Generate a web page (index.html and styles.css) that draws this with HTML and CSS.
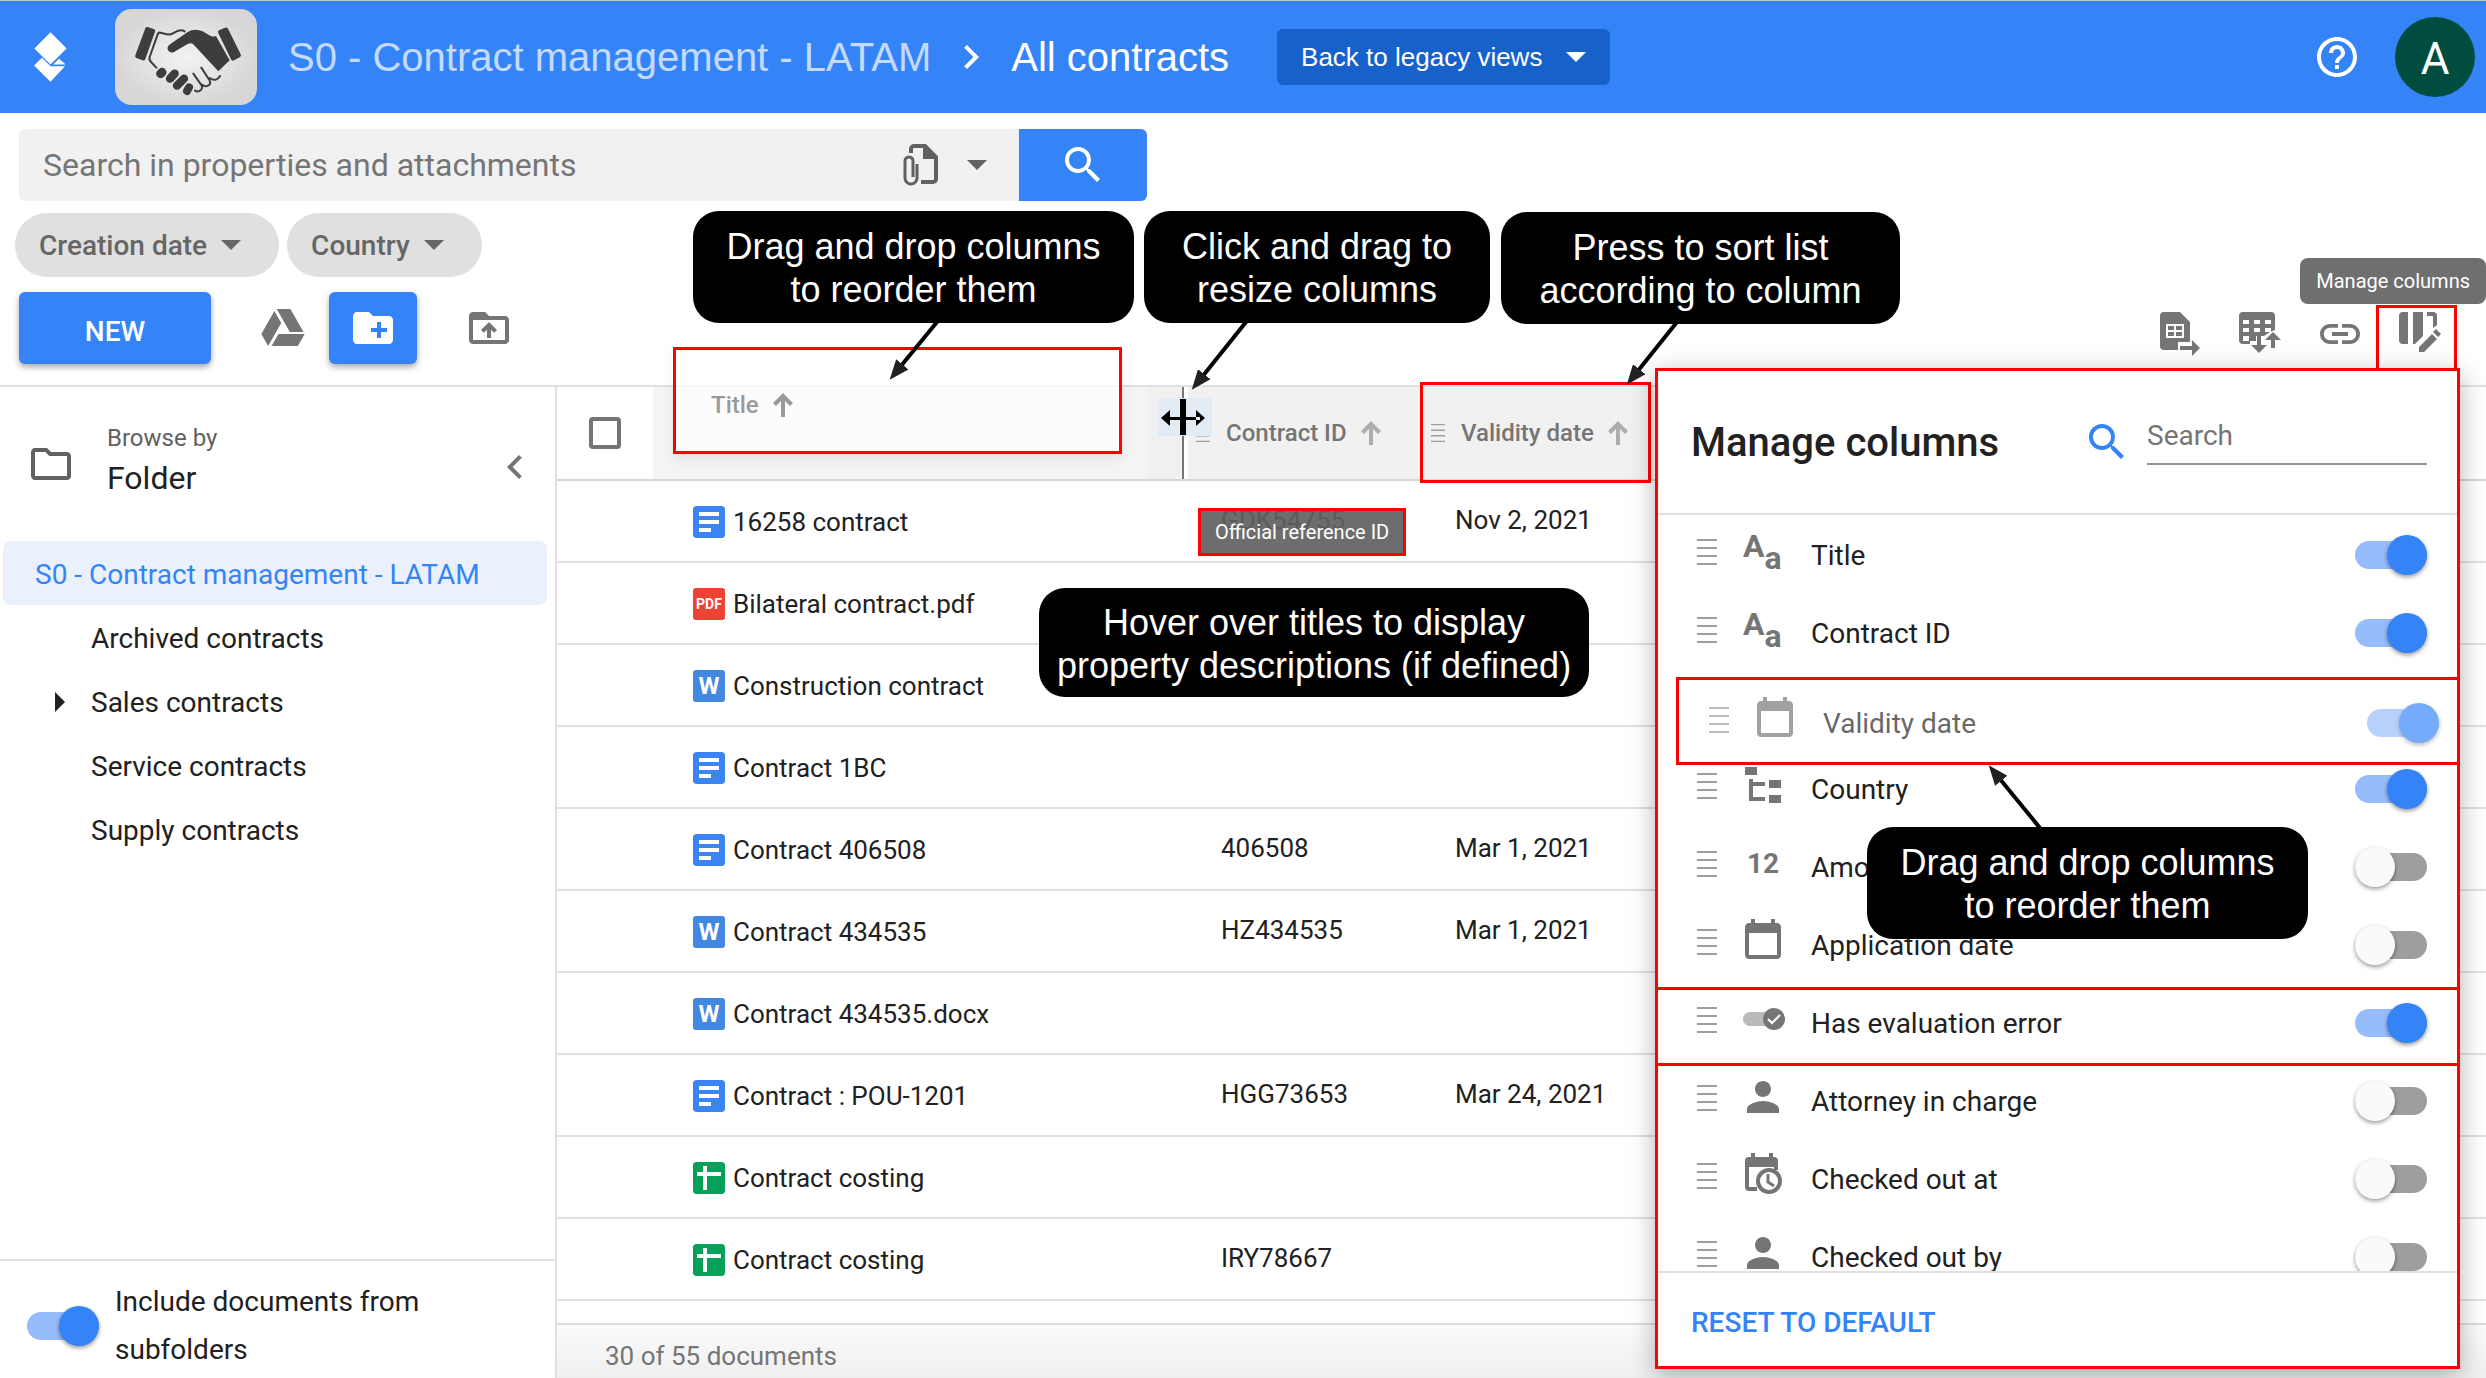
FILE: index.html
```html
<!DOCTYPE html>
<html lang="en">
<head>
    <meta charset="UTF-8">
    <meta name="viewport" content="width=device-width, initial-scale=1.0">
    <title>All contracts</title>
    <link rel="stylesheet" href="styles.css">
</head>
<body>
    <svg class="sprite" aria-hidden="true">
        <symbol id="i-search" viewBox="0 0 24 24"><path d="M15.5 14h-.79l-.28-.27A6.471 6.471 0 0 0 16 9.5 6.5 6.5 0 1 0 9.5 16c1.61 0 3.09-.59 4.23-1.57l.27.28v.79l5 4.99L20.49 19l-4.99-5zm-6 0C7.01 14 5 11.99 5 9.5S7.01 5 9.5 5 14 7.01 14 9.5 11.99 14 9.5 14z"/></symbol>
        <symbol id="i-help" viewBox="0 0 24 24"><path d="M11 18h2v-2h-2v2zm1-16C6.48 2 2 6.48 2 12s4.48 10 10 10 10-4.48 10-10S17.52 2 12 2zm0 18c-4.41 0-8-3.59-8-8s3.59-8 8-8 8 3.59 8 8-3.59 8-8 8zm0-14c-2.21 0-4 1.79-4 4h2c0-1.1.9-2 2-2s2 .9 2 2c0 2-3 1.75-3 5h2c0-2.25 3-2.5 3-5 0-2.21-1.79-4-4-4z"/></symbol>
        <symbol id="i-down" viewBox="0 0 20 10"><path d="M0 0l10 10L20 0z"/></symbol>
        <symbol id="i-right" viewBox="0 0 10 20"><path d="M0 0l10 10L0 20z"/></symbol>
        <symbol id="i-chevron-right" viewBox="0 0 24 24"><path d="M10 6L8.59 7.41 13.17 12l-4.58 4.59L10 18l6-6z"/></symbol>
        <symbol id="i-chevron-left" viewBox="0 0 24 24"><path d="M15.41 7.41L14 6l-6 6 6 6 1.41-1.41L10.83 12z"/></symbol>
        <symbol id="i-attach" viewBox="0 0 36 42">
            <path d="M8 9V5a3 3 0 0 1 3-3h11l11 11v22a3 3 0 0 1-3 3H18" fill="none" stroke="currentColor" stroke-width="4"/>
            <path d="M20 2v13h14L22 1z"/>
            <path d="M14 20v14a6 6 0 0 1-12 0V17a4 4 0 0 1 8 0v16" fill="none" stroke="currentColor" stroke-width="3"/>
        </symbol>
        <symbol id="i-drive" viewBox="0 0 24 24"><path d="M7.71 3.5L1.15 15l3.43 6 6.55-11.5L7.71 3.5zM9.73 15L6.3 21h13.12l3.43-6H9.73zM22.28 14l-6.56-11.5H8.86L15.42 14h6.86z"/></symbol>
        <symbol id="i-new-folder" viewBox="0 0 24 24"><path d="M20 6h-8l-2-2H4c-1.11 0-1.99.89-1.99 2L2 18c0 1.11.89 2 2 2h16c1.11 0 2-.89 2-2V8c0-1.11-.89-2-2-2zm-1 8h-3v3h-2v-3h-3v-2h3V9h2v3h3v2z"/></symbol>
        <symbol id="i-upload" viewBox="0 0 24 24"><path d="M20 6h-8l-2-2H4c-1.1 0-1.99.9-1.99 2L2 18c0 1.1.9 2 2 2h16c1.1 0 2-.9 2-2V8c0-1.1-.9-2-2-2zm0 12H4V8h16v10zM8 13.01l1.41 1.41L11 12.84V17h2v-4.16l1.59 1.59L16 13.01 12.01 9 8 13.01z"/></symbol>
        <symbol id="i-folder" viewBox="0 0 24 24"><path d="M9.17 6l2 2H20v10H4V6h5.17M10 4H4c-1.1 0-1.99.9-1.99 2L2 18c0 1.1.9 2 2 2h16c1.1 0 2-.9 2-2V8c0-1.1-.9-2-2-2h-8l-2-2z"/></symbol>
        <symbol id="i-export" viewBox="0 0 48 48">
            <path fill-rule="evenodd" d="M8 2h16l10 10v20H22v8H8a4 4 0 0 1-4-4V6a4 4 0 0 1 4-4zm2 12v14h18V14z"/>
            <path d="M12 16h6v4h-6zm8 0h6v4h-6zm-8 6h6v4h-6zm8 0h6v4h-6z"/>
            <path d="M24 36h12v-6l8 8-8 8v-6H24z"/>
        </symbol>
        <symbol id="i-table" viewBox="0 0 48 48">
            <path fill-rule="evenodd" d="M7 2h28a4 4 0 0 1 4 4v14l-5 2-6 4h-8v5h-6v3H7a4 4 0 0 1-4-4V6a4 4 0 0 1 4-4zm0 8v4h6v-4zm11 0v4h6v-4zm11 0v4h6v-4zM7 18v4h6v-4zm11 0v4h6v-4zm11 0v4h6v-4zM7 26v5h6v-5z"/>
            <path d="M21 26h4v9h6l-8 8-8-8h6z"/>
            <path d="M35 38V30h-6l8-8 8 8h-6v8z"/>
        </symbol>
        <symbol id="i-link" viewBox="0 0 24 24"><path d="M3.9 12c0-1.71 1.39-3.1 3.1-3.1h4V7H7c-2.76 0-5 2.24-5 5s2.24 5 5 5h4v-1.9H7c-1.71 0-3.1-1.39-3.1-3.1zM8 13h8v-2H8v2zm9-6h-4v1.9h4c1.71 0 3.1 1.39 3.1 3.1s-1.39 3.1-3.1 3.1h-4V17h4c2.76 0 5-2.24 5-5s-2.24-5-5-5z"/></symbol>
        <symbol id="i-columns" viewBox="0 0 48 48">
            <path d="M7 2h5v32H7a4 4 0 0 1-4-4V6a4 4 0 0 1 4-4zM17 2h10v24l-8 8h-2z"/>
            <path d="M31 2h6a4 4 0 0 1 4 4v9l-4 3V6h-6z"/>
            <path d="M23 37l13-13 5 5-13 13h-5zM37 22l3-3 5 5-3 3z"/>
        </symbol>
        <symbol id="i-sort" viewBox="0 0 20 24"><path d="M10 0l10 10-3 3-5-5v16H8V8l-5 5-3-3z"/></symbol>
        <symbol id="i-grip" viewBox="0 0 20 26"><path d="M0 0h20v2H0zM0 8h20v2H0zM0 16h20v2H0zM0 24h20v2H0z"/></symbol>
        <symbol id="i-date" viewBox="0 0 24 24"><path d="M19 3h-1V1h-2v2H8V1H6v2H5c-1.1 0-2 .9-2 2v14c0 1.1.9 2 2 2h14c1.1 0 2-.9 2-2V5c0-1.1-.9-2-2-2zm0 16H5V8h14v11z"/></symbol>
        <symbol id="i-date-time" viewBox="0 0 48 48">
            <path d="M10 6h2V2h4v4h14V2h4v4h1a4 4 0 0 1 4 4v9h-4v-3H10v20h8v4h-8a4 4 0 0 1-4-4V10a4 4 0 0 1 4-4z"/>
            <circle cx="30" cy="30" r="11" fill="none" stroke="currentColor" stroke-width="4"/>
            <path d="M29 23v8l6 4" fill="none" stroke="currentColor" stroke-width="3"/>
        </symbol>
        <symbol id="i-tree" viewBox="0 0 48 48"><path d="M6 6h12v8H6zM30 19h12v8H30zM30 34h12v8H30zM10 18h4v3h12v4H14v11h12v4H10z"/></symbol>
        <symbol id="i-boolean" viewBox="0 0 48 48">
            <rect x="4" y="17" width="34" height="14" rx="7" opacity=".5"/>
            <circle cx="35" cy="24" r="11"/>
            <path d="M29 24l4 4 8-8" fill="none" stroke="#fff" stroke-width="2"/>
        </symbol>
        <symbol id="i-person" viewBox="0 0 24 24"><path d="M12 12c2.21 0 4-1.79 4-4s-1.79-4-4-4-4 1.79-4 4 1.79 4 4 4zm0 2c-2.67 0-8 1.34-8 4v2h16v-2c0-2.66-5.33-4-8-4z"/></symbol>
        <symbol id="f-doc" viewBox="0 0 32 32"><rect width="32" height="32" rx="3" fill="#3a85f3"/><path d="M6 6h20v4H6zM6 14h20v4H6zM6 22h12v4H6z" fill="#fff"/></symbol>
        <symbol id="f-sheet" viewBox="0 0 32 32"><rect width="32" height="32" rx="3" fill="#07a05a"/><path d="M10 4h4v6h14v4H14v14h-4V14H4v-4h6z" fill="#fff"/></symbol>
    </svg>

    <div class="app">
        <header class="app-bar">
            <svg class="logo" viewBox="102 95 100 152">
                <path d="M152 96l49 49-49 49-49-49z"/>
                <path d="M126 173l26 26h44l-44 47-50-49z"/>
                <path d="M178 176l20 18h-38z"/>
            </svg>
            <svg class="library-thumb" viewBox="345 27 426 288">
                <defs>
                    <radialGradient id="thumb-bg"><stop offset="0" stop-color="#f3f1f3"/><stop offset="1" stop-color="#d9d6d8"/></radialGradient>
                </defs>
                <rect x="345" y="27" width="426" height="288" rx="50" fill="url(#thumb-bg)"/>
                <g fill="#3b3d3e">
                    <path d="M443 81l20 7q4 2 2 7l-29 82q-2 6-8 4l-19-7q-5-2-3-8l30-81q2-5 7-4z"/>
                    <path d="M657 91l18-8q6-2 9 3l38 77q3 6-3 9l-17 9q-6 3-9-3l-38-78q-3-6 2-9z"/>
                    <path d="M508 134l55-38q20-12 45-2l20 12q10 6 20 2l41 73-34 33-76-82q-8-4-16 0l-41 24c-14 7-27-12-14-22z"/>
                </g>
                <path d="M554 94c-14-9-27 1-37 7s-22 0-36-3q-6-1-8 5l-24 68q-3 8 4 15l16 17" fill="none" stroke="#3b3d3e" stroke-width="6" stroke-linecap="round" stroke-linejoin="round"/>
                <g stroke="#3b3d3e" stroke-linecap="round">
                    <path d="M482 221l4-4" stroke-width="27"/>
                    <path d="M510 236l14-15" stroke-width="25"/>
                    <path d="M531 257l21-21" stroke-width="25"/>
                    <path d="M561 273l6-11" stroke-width="24"/>
                </g>
                <path d="M585 272c14 8 28-8 17-20l-22-31M604 253c16 12 33 1 24-13l-24-37M629 234c12 9 24 7 31-6" fill="none" stroke="#3b3d3e" stroke-width="6" stroke-linecap="round"/>
            </svg>
            <nav class="crumbs">
                <a href="#" class="crumb">S0 - Contract management - LATAM</a>
                <svg class="icon"><use href="#i-chevron-right"/></svg>
                <a href="#" class="crumb crumb-current">All contracts</a>
            </nav>
            <button class="legacy-btn">Back to legacy views <svg class="caret"><use href="#i-down"/></svg></button>
            <div class="account">
                <button class="icon-btn" aria-label="Help"><svg class="icon"><use href="#i-help"/></svg></button>
                <button class="avatar">A</button>
            </div>
        </header>

        <section class="toolbar">
            <form class="search">
                <input type="search" class="search-input" placeholder="Search in properties and attachments" aria-label="Search in properties and attachments">
                <button type="button" class="search-scope" aria-label="Search scope">
                    <svg class="attach"><use href="#i-attach"/></svg>
                    <svg class="caret"><use href="#i-down"/></svg>
                </button>
                <button type="button" class="search-btn" aria-label="Search"><svg class="icon"><use href="#i-search"/></svg></button>
            </form>
            <div class="chips">
                <button class="chip">Creation date <svg class="caret"><use href="#i-down"/></svg></button>
                <button class="chip">Country <svg class="caret"><use href="#i-down"/></svg></button>
            </div>
            <div class="actions">
                <button class="new-btn">NEW</button>
                <button class="icon-btn drive-btn" aria-label="Add from Drive"><svg class="icon"><use href="#i-drive"/></svg></button>
                <button class="new-folder-btn" aria-label="New folder"><svg class="icon"><use href="#i-new-folder"/></svg></button>
                <button class="icon-btn upload-btn" aria-label="Upload folder"><svg class="icon"><use href="#i-upload"/></svg></button>
                <div class="view-actions">
                    <button class="icon-btn" aria-label="Export list"><svg class="icon"><use href="#i-export"/></svg></button>
                    <button class="icon-btn" aria-label="Bulk update"><svg class="icon"><use href="#i-table"/></svg></button>
                    <button class="icon-btn" aria-label="Copy link"><svg class="icon"><use href="#i-link"/></svg></button>
                    <button class="icon-btn" aria-label="Manage columns"><svg class="icon"><use href="#i-columns"/></svg></button>
                </div>
            </div>
        </section>

        <div class="body">
            <aside class="sidebar">
                <div class="browse">
                    <svg class="icon"><use href="#i-folder"/></svg>
                    <div class="browse-text">
                        <div class="browse-by">Browse by</div>
                        <div class="browse-mode">Folder</div>
                    </div>
                    <button class="icon-btn" aria-label="Collapse"><svg class="icon"><use href="#i-chevron-left"/></svg></button>
                </div>
                <nav class="tree">
                    <a href="#" class="tree-item tree-root">S0 - Contract management - LATAM</a>
                    <a href="#" class="tree-item">Archived contracts</a>
                    <a href="#" class="tree-item"><svg class="expander"><use href="#i-right"/></svg>Sales contracts</a>
                    <a href="#" class="tree-item">Service contracts</a>
                    <a href="#" class="tree-item">Supply contracts</a>
                </nav>
                <div class="subfolders">
                    <input type="checkbox" class="toggle" id="subfolders" checked>
                    <label for="subfolders">Include documents from subfolders</label>
                </div>
            </aside>

            <main class="list">
                <div class="list-scroll">
                    <table class="docs">
                        <thead>
                            <tr>
                                <th class="col-check"><input type="checkbox" class="check" aria-label="Select all"></th>
                                <th class="col-title"></th>
                                <th class="col-id"><div class="head"><svg class="head-grip"><use href="#i-grip"/></svg>Contract ID <svg class="sort"><use href="#i-sort"/></svg></div></th>
                                <th class="col-date"><div class="head"><svg class="head-grip"><use href="#i-grip"/></svg>Validity date <svg class="sort"><use href="#i-sort"/></svg></div></th>
                                <th class="col-rest"></th>
                            </tr>
                        </thead>
                        <tbody>
                            <tr><td></td><td><a href="#" class="doc"><svg class="file"><use href="#f-doc"/></svg>16258 contract</a></td><td>GDK54755</td><td>Nov 2, 2021</td><td></td></tr>
                            <tr><td></td><td><a href="#" class="doc"><span class="file file-pdf">PDF</span>Bilateral contract.pdf</a></td><td></td><td></td><td></td></tr>
                            <tr><td></td><td><a href="#" class="doc"><span class="file file-word">W</span>Construction contract</a></td><td></td><td></td><td></td></tr>
                            <tr><td></td><td><a href="#" class="doc"><svg class="file"><use href="#f-doc"/></svg>Contract 1BC</a></td><td></td><td></td><td></td></tr>
                            <tr><td></td><td><a href="#" class="doc"><svg class="file"><use href="#f-doc"/></svg>Contract 406508</a></td><td>406508</td><td>Mar 1, 2021</td><td></td></tr>
                            <tr><td></td><td><a href="#" class="doc"><span class="file file-word">W</span>Contract 434535</a></td><td>HZ434535</td><td>Mar 1, 2021</td><td></td></tr>
                            <tr><td></td><td><a href="#" class="doc"><span class="file file-word">W</span>Contract 434535.docx</a></td><td></td><td></td><td></td></tr>
                            <tr><td></td><td><a href="#" class="doc"><svg class="file"><use href="#f-doc"/></svg>Contract : POU-1201</a></td><td>HGG73653</td><td>Mar 24, 2021</td><td></td></tr>
                            <tr><td></td><td><a href="#" class="doc"><svg class="file"><use href="#f-sheet"/></svg>Contract costing</a></td><td></td><td></td><td></td></tr>
                            <tr><td></td><td><a href="#" class="doc"><svg class="file"><use href="#f-sheet"/></svg>Contract costing</a></td><td>IRY78667</td><td></td><td></td></tr>
                        </tbody>
                    </table>
                </div>
                <footer class="list-footer">30 of 55 documents</footer>
            </main>
        </div>

        <!-- Column being dragged, resize handle and tooltips -->
        <div class="drag-title">Title <svg class="sort"><use href="#i-sort"/></svg></div>
        <div class="resize-line"></div>
        <svg class="resize-cursor" viewBox="0 0 54 38">
            <rect width="54" height="38" fill="#e3ebf5"/>
            <path d="M22 1h6v36h-6zM9 19h33v3H9zM3 20l9-8v16zM47 20l-9-8v16z"/>
        </svg>
        <div class="mark mark-date"></div>
        <div class="mark mark-columns"></div>
        <div class="tip tip-columns">Manage columns</div>
        <div class="tip tip-ref">Official reference ID</div>

        <section class="panel">
            <div class="panel-head">
                <h2>Manage columns</h2>
                <svg class="icon"><use href="#i-search"/></svg>
                <input type="search" class="panel-search" placeholder="Search" aria-label="Search columns">
            </div>
            <ul class="fields">
                <li class="field"><svg class="grip"><use href="#i-grip"/></svg><span class="type">A<span class="type-low">a</span></span><label for="c1">Title</label><input type="checkbox" class="toggle" id="c1" checked></li>
                <li class="field"><svg class="grip"><use href="#i-grip"/></svg><span class="type">A<span class="type-low">a</span></span><label for="c2">Contract ID</label><input type="checkbox" class="toggle" id="c2" checked></li>
                <li class="slot">
                    <div class="field field-drag"><svg class="grip"><use href="#i-grip"/></svg><svg class="type"><use href="#i-date"/></svg><label for="c3">Validity date</label><input type="checkbox" class="toggle" id="c3" checked></div>
                </li>
                <li class="field"><svg class="grip"><use href="#i-grip"/></svg><svg class="type"><use href="#i-tree"/></svg><label for="c4">Country</label><input type="checkbox" class="toggle" id="c4" checked></li>
                <li class="field"><svg class="grip"><use href="#i-grip"/></svg><span class="type type-number">12</span><label for="c5">Amount</label><input type="checkbox" class="toggle" id="c5"></li>
                <li class="field"><svg class="grip"><use href="#i-grip"/></svg><svg class="type"><use href="#i-date"/></svg><label for="c6">Application date</label><input type="checkbox" class="toggle" id="c6"></li>
                <li class="field field-marked"><svg class="grip"><use href="#i-grip"/></svg><svg class="type"><use href="#i-boolean"/></svg><label for="c7">Has evaluation error</label><input type="checkbox" class="toggle" id="c7" checked></li>
                <li class="field"><svg class="grip"><use href="#i-grip"/></svg><svg class="type"><use href="#i-person"/></svg><label for="c8">Attorney in charge</label><input type="checkbox" class="toggle" id="c8"></li>
                <li class="field"><svg class="grip"><use href="#i-grip"/></svg><svg class="type"><use href="#i-date-time"/></svg><label for="c9">Checked out at</label><input type="checkbox" class="toggle" id="c9"></li>
                <li class="field"><svg class="grip"><use href="#i-grip"/></svg><svg class="type"><use href="#i-person"/></svg><label for="c10">Checked out by</label><input type="checkbox" class="toggle" id="c10"></li>
            </ul>
            <div class="panel-foot"><button class="reset-btn">RESET TO DEFAULT</button></div>
        </section>

        <!-- Help callouts -->
        <div class="callout callout-reorder">Drag and drop columns<br>to reorder them</div>
        <div class="callout callout-resize">Click and drag to<br>resize columns</div>
        <div class="callout callout-sort">Press to sort list<br>according to column</div>
        <div class="callout callout-hover">Hover over titles to display<br>property descriptions (if defined)</div>
        <div class="callout callout-panel">Drag and drop columns<br>to reorder them</div>
        <svg class="arrows">
            <defs>
                <marker id="head" viewBox="0 0 20 16" refX="10" refY="8" markerWidth="20" markerHeight="16" markerUnits="userSpaceOnUse" orient="auto"><path d="M0 0l20 8-20 8z"/></marker>
            </defs>
            <path d="M937 322L896 372" marker-end="url(#head)"/>
            <path d="M1246 322L1198 382" marker-end="url(#head)"/>
            <path d="M1677 322L1633 377" marker-end="url(#head)"/>
            <path d="M2040 828L1995 773" marker-end="url(#head)"/>
        </svg>
    </div>
</body>
</html>
```
FILE: styles.css
```css
* {
    box-sizing: border-box;
}

body {
    margin: 0;
    font-family: Roboto, "Liberation Sans", sans-serif;
    font-size: 26px;
    color: #212121;
    background: #fff;
}

a {
    color: inherit;
    text-decoration: none;
}

button {
    border: none;
    padding: 0;
    background: none;
    font: inherit;
    color: inherit;
    cursor: pointer;
}

input {
    margin: 0;
    font: inherit;
}

svg {
    fill: currentColor;
    flex: none;
}

.sprite {
    position: absolute;
    width: 0;
    height: 0;
}

.icon {
    display: block;
    width: 48px;
    height: 48px;
}

.caret {
    width: 20px;
    height: 10px;
}

.icon-btn {
    color: #757575;
}

.app {
    position: relative;
    display: flex;
    flex-direction: column;
    height: 100vh;
    overflow: hidden;
}

/* Header */
.app-bar {
    display: flex;
    align-items: center;
    height: 113px;
    padding: 0 11px 0 34px;
    border-top: 1px solid #c4c7cc;
    background: #3484f8;
    color: #fff;
}

.logo {
    width: 33px;
    height: 50px;
}

.library-thumb {
    width: 142px;
    height: 96px;
    margin: 0 31px 0 48px;
}

.crumbs {
    display: flex;
    align-items: center;
    gap: 16px;
    font-family: "Liberation Sans", Arial, sans-serif;
    font-size: 40px;
}

.crumb {
    color: #c4daff;
}

.crumb-current {
    color: #fff;
}

.legacy-btn {
    display: flex;
    align-items: center;
    gap: 24px;
    height: 56px;
    margin-left: 48px;
    padding: 0 24px;
    border-radius: 6px;
    background: #1761cb;
    font-family: "Liberation Sans", Arial, sans-serif;
    font-size: 26px;
}

.account {
    display: flex;
    align-items: center;
    gap: 34px;
    margin-left: auto;
}

.account .icon-btn {
    color: #fff;
}

.avatar {
    width: 80px;
    height: 80px;
    padding-top: 4px;
    border-radius: 50%;
    background: #004d40;
    font-size: 44px;
}

/* Search, filters and actions */
.toolbar {
    padding: 16px 42px 20px 19px;
    border-bottom: 2px solid #e0e0e0;
}

.search {
    display: flex;
    width: 1128px;
    height: 72px;
}

.search-input {
    flex: 1;
    padding: 0 24px;
    border: none;
    border-radius: 6px 0 0 6px;
    background: #f1f1f1;
    font-size: 32px;
}

input::placeholder {
    color: #757575;
    opacity: 1;
}

.search-scope {
    display: flex;
    align-items: center;
    gap: 28px;
    padding-right: 32px;
    background: #f1f1f1;
    color: #616161;
}

.attach {
    width: 36px;
    height: 42px;
}

.search-btn {
    display: flex;
    align-items: center;
    justify-content: center;
    width: 128px;
    border-radius: 0 6px 6px 0;
    background: #3484f8;
    color: #fff;
}

.chips {
    display: flex;
    gap: 8px;
    margin: 12px 0 14px -4px;
}

.chip {
    display: flex;
    align-items: center;
    gap: 14px;
    height: 64px;
    padding: 0 38px 0 24px;
    border-radius: 32px;
    background: #e0e0e0;
    color: #666;
    font-size: 28px;
    font-weight: 500;
}

.actions {
    display: flex;
    align-items: center;
    height: 74px;
}

.new-btn,
.new-folder-btn {
    height: 72px;
    border-radius: 6px;
    background: #3484f8;
    color: #fff;
    box-shadow: 0 3px 6px rgba(0, 0, 0, 0.35);
}

.new-btn {
    width: 192px;
    padding-top: 6px;
    font-size: 28px;
    font-weight: 500;
}

.drive-btn {
    margin-left: 48px;
}

.new-folder-btn {
    width: 88px;
    margin: 0 48px 0 22px;
    padding: 0 20px;
}

.view-actions {
    display: flex;
    align-self: flex-end;
    gap: 32px;
    margin-left: auto;
    padding-bottom: 7px;
}

/* Sidebar */
.body {
    display: flex;
    flex: 1;
    min-height: 0;
}

.sidebar {
    display: flex;
    flex-direction: column;
    width: 557px;
    border-right: 2px solid #e0e0e0;
}

.browse {
    display: flex;
    align-items: center;
    height: 154px;
    padding: 0 16px 0 27px;
    color: #616161;
}

.browse-text {
    flex: 1;
    margin-left: 32px;
    padding-bottom: 8px;
}

.browse .icon-btn {
    padding-top: 6px;
}

.browse-by {
    font-size: 24px;
    line-height: 36px;
}

.browse-mode {
    color: #212121;
    font-size: 32px;
    line-height: 44px;
}

.tree {
    flex: 1;
    padding: 0 8px 0 3px;
    font-size: 28px;
}

.tree-item {
    position: relative;
    display: flex;
    align-items: center;
    height: 64px;
    padding: 2px 0 0 88px;
}

.tree-root {
    padding-left: 32px;
    border-radius: 8px;
    background: #eaf1fd;
    color: #3484f8;
}

.expander {
    position: absolute;
    left: 52px;
    width: 10px;
    height: 20px;
}

.subfolders {
    display: flex;
    align-items: center;
    gap: 16px;
    height: 119px;
    padding: 12px 80px 0 27px;
    border-top: 2px solid #e0e0e0;
    font-size: 28px;
    line-height: 48px;
}

/* Switches */
.toggle {
    position: relative;
    flex: none;
    width: 72px;
    height: 40px;
    appearance: none;
}

.toggle::before {
    content: "";
    position: absolute;
    inset: 6px 0;
    border-radius: 14px;
    background: #9e9e9e;
}

.toggle::after {
    content: "";
    position: absolute;
    left: 0;
    width: 40px;
    height: 40px;
    border-radius: 50%;
    background: #fafafa;
    box-shadow: 0 2px 4px rgba(0, 0, 0, 0.4);
}

.toggle:checked::before {
    background: #97bcfb;
}

.toggle:checked::after {
    left: 32px;
    background: #3484f8;
}

/* Document list */
.list {
    display: flex;
    flex: 1;
    flex-direction: column;
    min-width: 0;
}

.list-scroll {
    flex: 1;
    overflow: hidden;
}

.docs {
    width: 100%;
    table-layout: fixed;
    border-collapse: separate;
    border-spacing: 0;
}

.docs th {
    height: 94px;
    padding: 0;
    border-bottom: 2px solid #d6d6d6;
    color: #757575;
    font-size: 24px;
    font-weight: 500;
    text-align: left;
}

.docs td {
    height: 82px;
    padding: 0 0 2px 33px;
    border-bottom: 2px solid #e0e0e0;
}

.docs td:nth-child(2) {
    padding: 2px 0 0 40px;
}

.docs td:nth-child(4) {
    padding-left: 34px;
}

.docs .col-check {
    width: 96px;
    padding-left: 32px;
}

.col-title {
    width: 535px;
    background: #f4f4f4;
}

.col-id {
    width: 233px;
    background: #f1f1f1;
}

.docs .col-date {
    width: 232px;
    padding-left: 2px;
    background: #f1f1f1;
}

.check {
    display: block;
    width: 32px;
    height: 32px;
    border: 4px solid #757575;
    border-radius: 4px;
    appearance: none;
}

.head {
    display: flex;
    align-items: center;
    padding-left: 8px;
}

.head-grip {
    width: 14px;
    height: 30px;
    margin-right: 16px;
    color: #9e9e9e;
}

.sort {
    width: 20px;
    height: 24px;
    margin-left: 14px;
    color: #adadad;
}

.doc {
    display: flex;
    align-items: center;
    gap: 8px;
}

.file {
    width: 32px;
    height: 32px;
    border-radius: 3px;
    color: #fff;
    font-weight: 700;
    line-height: 32px;
    text-align: center;
}

.file-word {
    background: #4287e0;
    font-size: 24px;
}

.file-pdf {
    background: #ee4234;
    font-size: 14px;
}

.list-footer {
    height: 55px;
    padding: 12px 48px;
    border-top: 2px solid #dcdcdc;
    background: linear-gradient(#fbfbfb, #efefef);
    color: #757575;
    line-height: 38px;
}

/* Things floating over the list */
.drag-title {
    position: absolute;
    top: 347px;
    left: 673px;
    display: flex;
    align-items: center;
    width: 449px;
    height: 107px;
    padding: 8px 35px 0;
    border: 3px solid #f00;
    background: rgba(255, 255, 255, 0.75);
    box-shadow: 0 4px 12px rgba(0, 0, 0, 0.08);
    color: #9a9a9a;
    font-size: 24px;
    font-weight: 500;
}

.drag-title .sort {
    color: #9a9a9a;
}

.resize-line {
    position: absolute;
    top: 387px;
    left: 1148px;
    width: 40px;
    height: 92px;
    border-right: 4px solid #fff;
    background: linear-gradient(#757575, #757575) right / 2px 100% no-repeat #f0f0f0;
}

.resize-cursor {
    position: absolute;
    top: 398px;
    left: 1158px;
    width: 54px;
    height: 38px;
    fill: #000;
}

.mark {
    position: absolute;
    border: 3px solid #f00;
}

.mark-date {
    top: 382px;
    left: 1420px;
    width: 231px;
    height: 101px;
}

.mark-columns {
    top: 305px;
    right: 29px;
    width: 81px;
    height: 66px;
}

.tip {
    position: absolute;
    background: #6f6f6f;
    color: #fff;
    font-size: 20px;
}

.tip-columns {
    top: 258px;
    right: 0;
    padding: 0 16px;
    border-radius: 8px;
    line-height: 46px;
}

.tip-ref {
    top: 508px;
    left: 1198px;
    padding: 0 14px;
    border: 3px solid #f00;
    background: rgba(97, 97, 97, 0.92);
    line-height: 42px;
}

/* Manage columns panel */
.panel {
    position: absolute;
    top: 368px;
    right: 26px;
    bottom: 9px;
    display: flex;
    flex-direction: column;
    width: 805px;
    border: 3px solid #f00;
    background: #fff;
    box-shadow: 0 6px 24px rgba(0, 0, 0, 0.3);
    font-size: 28px;
}

.panel-head {
    display: flex;
    align-items: center;
    height: 144px;
    padding: 0 30px 0 33px;
    border-bottom: 2px solid #e0e0e0;
}

.panel-head h2 {
    flex: 1;
    margin: 0;
    font-size: 40px;
    font-weight: 500;
}

.panel-head .icon {
    margin-right: 16px;
    color: #3484f8;
}

.panel-search {
    width: 280px;
    height: 60px;
    margin-bottom: 14px;
    padding: 2px 0 0;
    border: none;
    border-bottom: 2px solid #949494;
    background: none;
}

.fields {
    flex: 1;
    margin: 0;
    padding: 1px 0 0;
    overflow: hidden;
    list-style: none;
}

.field {
    position: relative;
    display: flex;
    align-items: center;
    height: 78px;
    padding: 0 30px 0 39px;
}

.field label {
    flex: 1;
}

.slot {
    position: relative;
    z-index: 1;
    height: 78px;
}

.grip {
    width: 20px;
    height: 26px;
    margin-bottom: 6px;
    color: #9e9e9e;
}

.type {
    width: 48px;
    height: 48px;
    margin: 0 24px 8px 22px;
    padding-left: 4px;
    color: #757575;
    font-size: 32px;
    font-weight: 700;
    line-height: 38px;
}

svg.type {
    padding: 0;
}

.type-low {
    position: relative;
    top: 12px;
}

.type-number {
    padding: 0;
    font-size: 28px;
    line-height: 50px;
    text-align: center;
}

/* Row lifted out of the list while it is dragged */
.field-drag {
    position: absolute;
    top: 5px;
    right: 0;
    left: 18px;
    height: 88px;
    padding: 4px 18px 0 30px;
    border: 3px solid #f00;
    border-right: none;
    background: #fff;
}

.field-drag > * {
    opacity: 0.68;
}

.field-marked::after {
    content: "";
    position: absolute;
    inset: 3px 0 -4px;
    border-top: 3px solid #f00;
    border-bottom: 3px solid #f00;
    pointer-events: none;
}

.panel-foot {
    display: flex;
    align-items: center;
    height: 95px;
    padding: 6px 33px 0;
    border-top: 2px solid #e0e0e0;
}

.reset-btn {
    color: #3484f8;
    font-size: 28px;
    font-weight: 500;
}

/* Callouts */
.callout {
    position: absolute;
    display: flex;
    align-items: center;
    justify-content: center;
    height: 112px;
    padding-top: 2px;
    border-radius: 26px;
    background: #000;
    color: #fff;
    font-family: "Liberation Sans", Arial, sans-serif;
    font-size: 36px;
    line-height: 43px;
    text-align: center;
    white-space: nowrap;
}

.callout-reorder {
    top: 211px;
    left: 693px;
    width: 441px;
}

.callout-resize {
    top: 211px;
    left: 1144px;
    width: 346px;
}

.callout-sort {
    top: 212px;
    left: 1501px;
    width: 399px;
}

.callout-hover {
    top: 588px;
    left: 1039px;
    width: 550px;
    height: 109px;
}

.callout-panel {
    top: 827px;
    right: 178px;
    width: 441px;
}

.arrows {
    position: absolute;
    inset: 0;
    width: 100%;
    height: 100%;
    pointer-events: none;
    stroke: #000;
    stroke-width: 4px;
}

.arrows marker path {
    stroke: none;
}
```
